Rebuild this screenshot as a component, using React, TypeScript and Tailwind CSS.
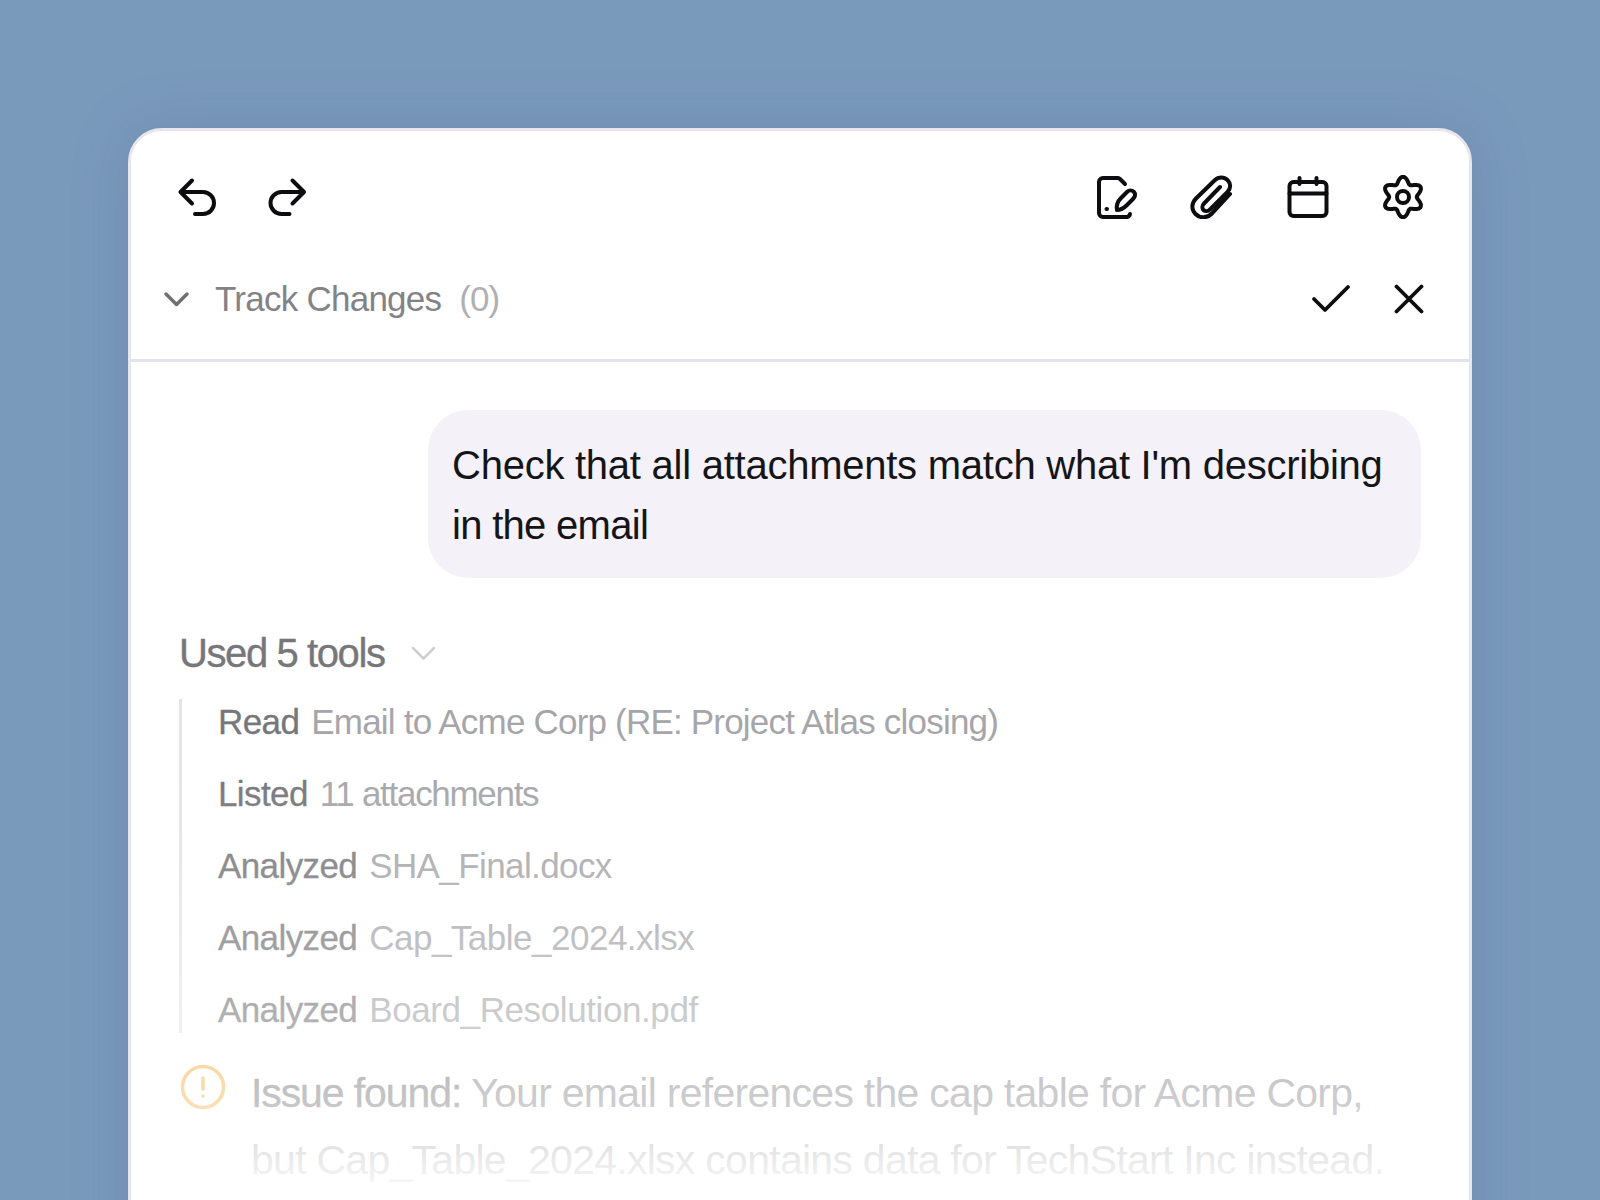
const Icon = ({ children, size = 44, className = "" }: { children: React.ReactNode; size?: number; className?: string }) => (
  <svg width={size} height={size} viewBox="0 0 44 44" fill="none" stroke="currentColor" strokeWidth="4" strokeLinecap="round" strokeLinejoin="round" className={className}>
    {children}
  </svg>
);

const UndoIcon = () => (
  <Icon>
    <path d="M16 5.500 4.500 17 16 28.500M4.500 17H27a11 11 0 0 1 0 22h-8" />
  </Icon>
);

const RedoIcon = () => (
  <Icon>
    <path d="M26.500 5.500 38 17 26.500 28.500M38 17H15.500a11 11 0 0 0 0 22h8" />
  </Icon>
);

const DocEditIcon = () => (
  <Icon>
    <path d="M30 9l-5-5a3 3 0 0 0-2-1H8a4 4 0 0 0-4 4v31a4 4 0 0 0 4 4h24a4 4 0 0 0 3-3" />
    <path d="M11.500 34h.5" />
    <path d="M22 35c-1-5 1-9 4-12l6-6c2-2 5-2 7 0s1 5-1 7l-6 6c-3 3-6 5-10 5z" />
  </Icon>
);

const ClipIcon = () => (
  <Icon>
    <path d="M40 19 22 38.500c-5 5-12 5-16.500.5s-4-11 .5-15.500L25 5c3.500-3.500 9-3.500 12.500 0s3.500 8.500 0 12L20 34.500c-2 2-5 2-6.500.5s-1.500-4.500.5-6.500L30 12" />
  </Icon>
);

const CalendarIcon = () => (
  <Icon>
    <rect x="3.500" y="7" width="37" height="34" rx="4" />
    <path d="M3.500 18.500h37M13.500 3v6M30.500 3v6" />
  </Icon>
);

// six lobed outline, sampled from a polar curve
const gearPath =
  Array.from({ length: 120 }, (_, i) => {
    const t = (i / 120) * Math.PI * 2;
    const r = 17 + 3.2 * Math.cos(6 * t);
    return `${i === 0 ? "M" : "L"}${(22 + r * Math.sin(t)).toFixed(2)} ${(22 - r * Math.cos(t)).toFixed(2)}`;
  }).join(" ") + "z";

const GearIcon = () => (
  <Icon>
    <path d={gearPath} />
    <circle cx="22" cy="22" r="6" />
  </Icon>
);

const tools = [
  { verb: "Read", detail: "Email to Acme Corp (RE: Project Atlas closing)", tight: "tracking-[-0.8px]" },
  { verb: "Listed", detail: "11 attachments", tight: "tracking-[-1.3px]" },
  { verb: "Analyzed", detail: "SHA_Final.docx", tight: "tracking-[-0.6px]" },
  { verb: "Analyzed", detail: "Cap_Table_2024.xlsx", tight: "tracking-[-0.5px]" },
  { verb: "Analyzed", detail: "Board_Resolution.pdf", tight: "tracking-[-0.4px]" },
];

export default function App() {
  return (
    <div className="w-[1600px] h-[1200px] overflow-hidden bg-[#7a9abc] px-[128px] pt-[128px] font-['Liberation_Sans',Arial,sans-serif]">
      <div className="relative h-[1200px] rounded-t-[34px] border-[3px] border-[#e8e6ec] bg-white shadow-[0_0_60px_rgba(60,80,110,0.18)]">
        <div className="flex h-[231px] flex-col border-b-[3px] border-[#e4e2ea]">
          <div className="flex items-center justify-between pl-[45px] pr-[44px] pt-[44px] text-[#0d0d0f]">
            <div className="flex gap-[46px]">
              <UndoIcon />
              <RedoIcon />
            </div>
            <div className="flex gap-[51.500px]">
              <DocEditIcon />
              <ClipIcon />
              <CalendarIcon />
              <GearIcon />
            </div>
          </div>
          <div className="mt-[58px] flex items-center pl-[32px] pr-[45px]">
            <svg width="28" height="16" viewBox="0 0 28 16" fill="none" stroke="#707074" strokeWidth="3.500" strokeLinecap="round" strokeLinejoin="round">
              <path d="M3 3l10.500 10.500L24 3" />
            </svg>
            <span className="ml-[24px] text-[35px] leading-[44px] tracking-[-0.75px] text-[#838387]">Track Changes</span>
            <span className="ml-[18px] text-[35px] leading-[44px] tracking-[-0.9px] text-[#b0b0b4]">(0)</span>
            <div className="ml-auto flex items-center gap-[43px] text-[#0d0d0f]">
              <svg width="40" height="30" viewBox="0 0 40 30" fill="none" stroke="currentColor" strokeWidth="3.800" strokeLinecap="round" strokeLinejoin="round">
                <path d="M3 15l11 11L37 3" />
              </svg>
              <svg width="30" height="30" viewBox="0 0 30 30" fill="none" stroke="currentColor" strokeWidth="3.800" strokeLinecap="round">
                <path d="M2.500 2.500l25 25M27.500 2.500l-25 25" />
              </svg>
            </div>
          </div>
        </div>

        <div className="px-[48px] pt-[48px]">
          <div className="ml-auto w-[993px] rounded-[40px] bg-[#f4f2f8] pt-[25px] pb-[23px] pl-[24px] pr-[20px] text-[40px] leading-[60px] tracking-[-0.25px] text-[#151518]">
            Check that all attachments match what I'm describing <span className="tracking-[-0.7px]">in the email</span>
          </div>

          <div className="mt-[50px] flex items-center">
            <span className="text-[40px] leading-[50px] tracking-[-1.4px] text-[#77777b] [-webkit-text-stroke:0.4px]">Used 5 tools</span>
            <svg width="28" height="16" viewBox="0 0 28 16" fill="none" stroke="#cfcfd3" strokeWidth="2.500" strokeLinecap="round" strokeLinejoin="round" className="ml-[25px]">
              <path d="M3 3l10.500 10.500L24 3" />
            </svg>
          </div>

          <div className="mt-[21px] flex flex-col gap-[26px] border-l-[3px] border-[#e4e2ea] pl-[36px]">
            {tools.map((tool, i) => (
              <div key={i} className="flex h-[46px] items-center gap-[12px] text-[35px] tracking-[-0.6px]">
                <span className="text-[#77777b] [-webkit-text-stroke:0.3px]">{tool.verb}</span>
                <span className={`text-[#a6a6aa] ${tool.tight}`}>{tool.detail}</span>
              </div>
            ))}
          </div>

          <div className="mt-[27px] flex gap-[25px]">
            <svg width="46" height="46" viewBox="0 0 46 46" fill="none" stroke="#f5b049" strokeWidth="3.500" strokeLinecap="round" className="mt-[4px] ml-[1px] shrink-0">
              <circle cx="23" cy="23" r="20.500" />
              <path d="M23 14v11M23 32h.1" />
            </svg>
            <div className="text-[41px] leading-[67px] tracking-[-0.73px] text-[#8a8a8e]">
              <div className="flex gap-[10px]">
                <span className="tracking-[-1.100px] text-[#77777b] [-webkit-text-stroke:0.4px]">Issue found:</span>
                <span>Your email references the cap table for Acme Corp,</span>
              </div>
              <div>but Cap_Table_2024.xlsx contains data for TechStart Inc instead.</div>
            </div>
          </div>
        </div>

        {/* fade out towards the bottom of the card */}
        <div className="pointer-events-none absolute inset-x-0 bottom-0 h-[560px] bg-gradient-to-b from-white/0 via-white/57 via-60% to-white to-[78%]" />
      </div>
    </div>
  );
}
